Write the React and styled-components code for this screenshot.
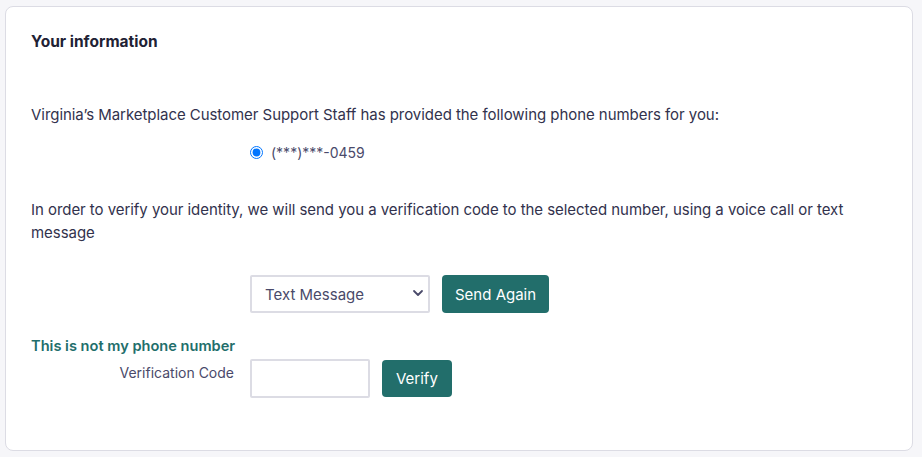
import React from "react";
import styled, { createGlobalStyle } from "styled-components";

const Global = createGlobalStyle`
  html, body { margin: 0; padding: 0; background: #f6f6f9; }
  body { font-family: Inter, "Noto Sans", sans-serif; color: #32324d; }
  * { box-sizing: border-box; }
`;

const Page = styled.div`
  padding: 6px 9px 6px 5px;
`;

const Card = styled.section`
  background: #ffffff;
  border: 1px solid #dcdce4;
  border-radius: 8px;
  height: 445px;
  padding: 25px 24px 0 25px;
  display: flex;
  flex-direction: column;
`;

const Heading = styled.h2`
  margin: 0;
  font-size: 15.5px;
  line-height: 20px;
  font-weight: 700;
  color: #212134;
`;

const Text = styled.p`
  margin: ${(p) => p.$mt || 0}px 0 0;
  font-size: 15px;
  letter-spacing: -0.05px;
  line-height: 23px;
  color: #32324d;
`;

const FormGrid = styled.div`
  display: grid;
  grid-template-columns: 203px auto;
  column-gap: 16px;
  align-items: center;
  margin-top: ${(p) => p.$mt || 0}px;
`;

const LabelCell = styled.div`
  text-align: right;
  font-size: 14px;
  color: #4a4a6a;
  align-self: start;
  padding-top: ${(p) => p.$pt || 0}px;
`;

const Controls = styled.div`
  display: flex;
  align-items: center;
  gap: 12px;
`;

const RadioLabel = styled.label`
  display: flex;
  align-items: center;
  gap: 8px;
  font-size: 14px;
  line-height: 23px;
  color: #4a4a6a;
`;

const Radio = styled.input`
  margin: 0;
  width: 13px;
  height: 13px;
`;

const SelectWrap = styled.div`
  position: relative;
  width: 180px;
  height: 38px;
`;

const Select = styled.select`
  appearance: none;
  width: 100%;
  height: 100%;
  border: 2px solid #dcdce4;
  border-radius: 2px;
  background: #fff;
  padding: 0 30px 0 13px;
  font-family: inherit;
  font-size: 15px;
  color: #4a4a6a;
`;

const Chevron = styled.svg`
  position: absolute;
  right: 6px;
  top: 14px;
  pointer-events: none;
`;

const Button = styled.button`
  height: ${(p) => p.$h || 38}px;
  padding: 0 ${(p) => p.$px || 13}px;
  border: none;
  border-radius: 4px;
  background: #226e6b;
  color: #ffffff;
  font-family: inherit;
  font-size: 15px;
  cursor: pointer;
`;

const Link = styled.a`
  font-size: 14.6px;
  line-height: 20px;
  font-weight: 600;
  color: #226e6b;
  text-decoration: none;
  white-space: nowrap;
`;

const CodeInput = styled.input`
  width: 120px;
  height: 39px;
  border: 2px solid #dcdce4;
  border-radius: 2px;
  background: #fff;
  font-family: inherit;
  font-size: 15px;
  padding: 0 8px;
`;

const Stack = styled.div`
  display: flex;
  flex-direction: column;
  gap: 3px;
  margin-top: ${(p) => p.$mt || 0}px;
`;

export default function App() {
  return (
    <>
      <Global />
      <Page>
        <Card>
          <Heading>Your information</Heading>
          <Text $mt={51}>
            Virginia’s Marketplace Customer Support Staff has provided the following phone numbers for you:
          </Text>
          <FormGrid $mt={15}>
            <span />
            <RadioLabel>
              <Radio type="radio" name="phone" defaultChecked />
              (***)***-0459
            </RadioLabel>
          </FormGrid>
          <Text $mt={34}>
            In order to verify your identity, we will send you a verification code to the selected number, using a voice call or text message
          </Text>
          <FormGrid $mt={31}>
            <span />
            <Controls>
              <SelectWrap>
                <Select defaultValue="text">
                  <option value="text">Text Message</option>
                  <option value="voice">Voice Call</option>
                </Select>
                <Chevron width="12" height="8" viewBox="0 0 12 8">
                  <path d="M2 2l4 4 4-4" fill="none" stroke="#4a4a6a" strokeWidth="1.8" strokeLinecap="round" strokeLinejoin="round" />
                </Chevron>
              </SelectWrap>
              <Button>Send Again</Button>
            </Controls>
          </FormGrid>
          <Stack $mt={23}>
            <Link href="#">This is not my phone number</Link>
            <FormGrid>
              <LabelCell $pt={5}>Verification Code</LabelCell>
              <Controls>
                <CodeInput type="text" />
                <Button $h={37} $px={14}>Verify</Button>
              </Controls>
            </FormGrid>
          </Stack>
        </Card>
      </Page>
    </>
  );
}
